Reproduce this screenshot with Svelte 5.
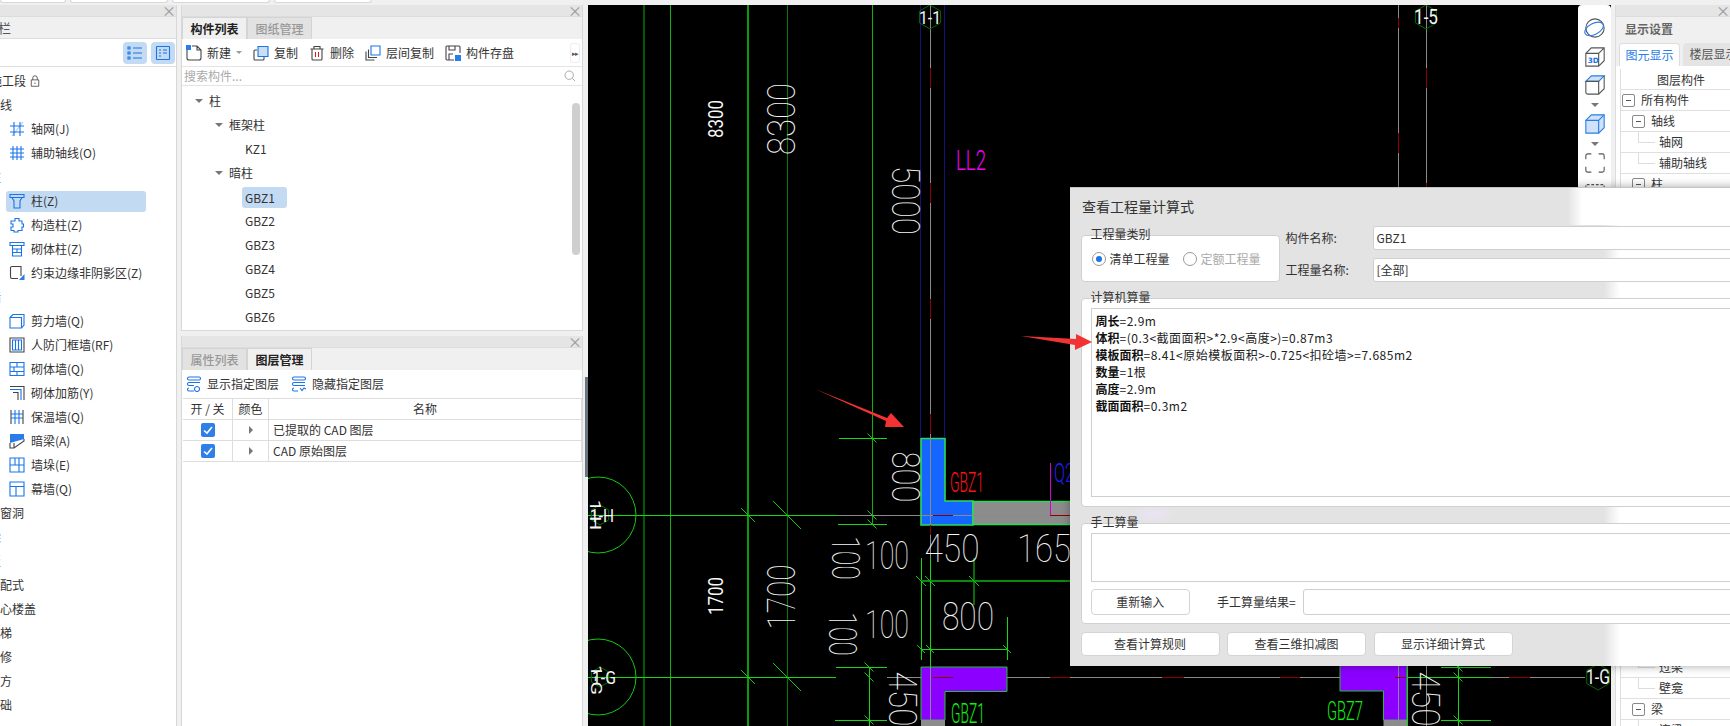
<script lang="ts">
  type Icon = { d?: string; g?: string; f?: string; l?: string; r?: string };

  const icons: Record<string, Icon> = {
    axis: { d: 'M1 5H15M1 11H15M5 1V15M11 1V15', l: 'M14 1L3 15' },
    aux: { d: 'M1 4H15M1 8H15M1 12H15M4 1V15M8 1V15M12 1V15' },
    col: { d: 'M1 1.5H15V4.5H1ZM3 4.5L5 8V15H11V8L13 4.5' },
    gz: { d: 'M6 1.5H10V4H13V7H14.5V10H13V13.5H9V15H5V13.5H2V10H4V7H2V4H6Z' },
    brickcol: { d: 'M1 1.5H15V4.5H1ZM3.5 4.5V15H12.5V4.5M3.5 8H12.5M3.5 11.5H12.5M8 8V11.5' },
    edge: { g: 'M3 1.5H12V11M3 1.5A1.5 1.5 0 0 0 1.5 3V12A1.5 1.5 0 0 0 3 13.5H9', f: 'M10 15L15.5 9V15Z' },
    shear: { d: 'M1 4.5H12.5V15H1ZM1 4.5L4 1.5H15V12L12.5 15' },
    door: { g: 'M1 1H15V15H1Z', d: 'M3.5 3H12.5V13H3.5ZM6.5 3V13M9.5 3V13' },
    brick: { d: 'M1 1.5H15V14.5H1ZM1 6H15M1 10.5H15M8 1.5V6M5 6V10.5M8 10.5V14.5' },
    rebar: { g: 'M1 1.5H15V15M4 7.5H9V15', d: 'M1 4.5H12V15' },
    insul: { g: 'M2 1V15M14 1V15', d: 'M6 1V15M10 1V15M2 5H14M2 9H14' },
    hidden: { f: 'M1 1H15V6L1 10Z', g: 'M1 10V15H5L15 8V6M5 10V15' },
    pier: { d: 'M1 1H15V15H1ZM1 8H15M6 1V8M10 8V15M10 1V8' },
    curtain: { d: 'M1 1H15V15H1ZM1 5.5H15M7 5.5V15' },
    listA: { d: 'M6 3H15M6 8H15M6 13H15M1 2H3V4H1ZM1 7H3V9H1ZM1 12H3V14H1Z' },
    listB: { d: 'M2 1.5H14A.5 .5 0 0 1 14.5 2V14A.5 .5 0 0 1 14 14.5H2A.5 .5 0 0 1 1.5 14V2A.5 .5 0 0 1 2 1.5ZM4 5H6M8 5H12M4 8H6M8 8H12M4 11H6' },
    newdoc: { g: 'M1 5V13A2 2 0 0 0 3 15H13A2 2 0 0 0 15 13V5L11 1H6M11 1V5H15', f: 'M0 0H5V5H0Z' },
    copy: { g: 'M4 5H2A1 1 0 0 0 1 6V14A1 1 0 0 0 2 15H10A1 1 0 0 0 11 14V12', d: 'M5 1.5H15V11.5H5Z', l: 'M5 1.5H15V11.5H5Z' },
    trash: { g: 'M1.5 4H14.5M5 4V1.5H11V4M3 4V14A1 1 0 0 0 4 15H12A1 1 0 0 0 13 14V4', r: 'M6.5 7V12M9.5 7V12' },
    layercopy: { g: 'M1 6.5V15H9.5M3.5 4.5V12.5H12', d: 'M6 1H15V10H6Z' },
    store: { g: 'M9 15H2A1 1 0 0 1 1 14V2A1 1 0 0 1 2 1H14A1 1 0 0 1 15 2V8M4 15V9H8M4 1V5H10V1', f: 'M10 10H16V16H10Z' },
    show: { d: 'M3 1H13A1.5 1.5 0 0 1 13 4H3A1.5 1.5 0 0 1 3 1ZM3 6.5H14M3 6.5A1.5 1.5 0 0 0 3 9.5H8M3 12A1.5 1.5 0 0 0 3 15H8M11 10.5A2.5 2.5 0 1 0 11.01 10.5Z' },
    hide: { d: 'M3 1H13A1.5 1.5 0 0 1 13 4H3A1.5 1.5 0 0 1 3 1ZM3 6.5H14M3 6.5A1.5 1.5 0 0 0 3 9.5H14M3 12A1.5 1.5 0 0 0 3 15H7M9 12L11 14.5L13 12L15 13' },
    lock: { g: 'M3 6.5H13V15H3ZM5 6.5V4A3 3 0 0 1 11 4V6.5M8 10V12' }
  };

  const sections = [
    { label: '施工段', off: 10, lock: true },
    { label: '轴线' },
    { icon: 'axis', label: '轴网(J)' },
    { icon: 'aux', label: '辅助轴线(O)' },
    { label: '柱', sliver: true },
    { icon: 'col', label: '柱(Z)', active: true },
    { icon: 'gz', label: '构造柱(Z)' },
    { icon: 'brickcol', label: '砌体柱(Z)' },
    { icon: 'edge', label: '约束边缘非阴影区(Z)' },
    { label: '墙', sliver: true },
    { icon: 'shear', label: '剪力墙(Q)' },
    { icon: 'door', label: '人防门框墙(RF)' },
    { icon: 'brick', label: '砌体墙(Q)' },
    { icon: 'rebar', label: '砌体加筋(Y)' },
    { icon: 'insul', label: '保温墙(Q)' },
    { icon: 'hidden', label: '暗梁(A)' },
    { icon: 'pier', label: '墙垛(E)' },
    { icon: 'curtain', label: '幕墙(Q)' },
    { label: '门窗洞' },
    { label: '梁', sliver: true },
    { label: '板', sliver: true },
    { label: '装配式' },
    { label: '空心楼盖' },
    { label: '楼梯' },
    { label: '装修' },
    { label: '土方' },
    { label: '基础' }
  ];

  const tree = [
    { label: '柱', depth: 0, open: true },
    { label: '框架柱', depth: 1, open: true },
    { label: 'KZ1', depth: 2 },
    { label: '暗柱', depth: 1, open: true },
    { label: 'GBZ1', depth: 2, active: true },
    { label: 'GBZ2', depth: 2 },
    { label: 'GBZ3', depth: 2 },
    { label: 'GBZ4', depth: 2 },
    { label: 'GBZ5', depth: 2 },
    { label: 'GBZ6', depth: 2 }
  ];

  const tools = [
    { icon: 'newdoc', label: '新建', arrow: true },
    { icon: 'copy', label: '复制' },
    { icon: 'trash', label: '删除' },
    { icon: 'layercopy', label: '层间复制' },
    { icon: 'store', label: '构件存盘' }
  ];

  // 图层构件 rows, each 21px; the middle ones sit behind the dialog
  const layers = [
    ['所有构件', 0, 1], ['轴线', 1, 1], ['轴网', 2, 0], ['辅助轴线', 2, 0], ['柱', 1, 1],
    ['柱', 2, 0], ['构造柱', 2, 0], ['砌体柱', 2, 0], ['约束边缘非阴影区', 2, 0], ['墙', 1, 1],
    ['剪力墙', 2, 0], ['人防门框墙', 2, 0], ['砌体墙', 2, 0], ['砌体加筋', 2, 0], ['保温墙', 2, 0],
    ['暗梁', 2, 0], ['墙垛', 2, 0], ['幕墙', 2, 0], ['门窗洞', 1, 1], ['门', 2, 0],
    ['窗', 2, 0], ['门联窗', 2, 0], ['墙洞', 2, 0], ['带形窗', 2, 0], ['带形洞', 2, 0],
    ['飘窗', 2, 0], ['老虎窗', 2, 0], ['过梁', 2, 0], ['壁龛', 2, 0], ['梁', 1, 1],
    ['连梁', 2, 0]
  ] as [string, number, number][];

  const formula = [
    ['周长', '=2.9m'],
    ['体积', '=(0.3<截面面积>*2.9<高度>)=0.87m3'],
    ['模板面积', '=8.41<原始模板面积>-0.725<扣砼墙>=7.685m2'],
    ['数量', '=1根'],
    ['高度', '=2.9m'],
    ['截面面积', '=0.3m2']
  ];

  // cad labels: centre x/y, length along the text, cap height, rotation
  const W = '#f6f6f6';
  const cadText = [
    { t: '8300', x: 716, y: 119, w: 38, h: 14, r: -90, c: W },
    { t: '8300', x: 781.5, y: 119, w: 72, h: 27, r: -90, c: W },
    { t: '5000', x: 905, y: 200.5, w: 69, h: 27, r: 90, c: W },
    { t: '800', x: 905, y: 477, w: 51, h: 27, r: 90, c: W },
    { t: '1700', x: 716, y: 596, w: 38, h: 14, r: -90, c: W },
    { t: '1700', x: 781, y: 597, w: 65, h: 27, r: -90, c: W },
    { t: '100', x: 845.7, y: 558, w: 44, h: 27, r: 90, c: W },
    { t: '100', x: 887, y: 555, w: 44, h: 28, r: 0, c: W },
    { t: '450', x: 952, y: 548, w: 55, h: 28, r: 0, c: W },
    { t: '1650', x: 1053, y: 548, w: 72, h: 28, r: 0, c: W },
    { t: '800', x: 968, y: 616, w: 52, h: 28, r: 0, c: W },
    { t: '100', x: 842.7, y: 634, w: 44, h: 27, r: 90, c: W },
    { t: '100', x: 887, y: 623.5, w: 44, h: 28, r: 0, c: W },
    { t: '450', x: 902, y: 699, w: 55, h: 27, r: 90, c: W },
    { t: '450', x: 1425, y: 699, w: 55, h: 27, r: 90, c: W },
    { t: 'GBZ1', x: 967, y: 482.5, w: 34, h: 19, r: 0, c: '#ff1010' },
    { t: 'GBZ1', x: 968, y: 713.5, w: 34, h: 19, r: 0, c: '#10f010' },
    { t: 'GBZ7', x: 1345, y: 711, w: 36, h: 18, r: 0, c: '#10f010' },
    { t: 'LL2', x: 971, y: 160, w: 30, h: 20, r: 0, c: '#f000f0' },
    { t: 'Q2', x: 1064, y: 473, w: 20, h: 18, r: 0, c: '#2020ff' },
    { t: '1-1', x: 930, y: 17, w: 22, h: 13, r: 0, c: W },
    { t: '1-5', x: 1426, y: 17, w: 24, h: 14, r: 0, c: W },
    { t: '1-H', x: 602, y: 515, w: 24, h: 13, r: 0, c: W },
    { t: '1-H', x: 595, y: 515, w: 30, h: 11, r: 90, c: W },
    { t: '1-G', x: 604, y: 677, w: 24, h: 13, r: 0, c: W },
    { t: '1-G', x: 596, y: 680, w: 30, h: 11, r: 90, c: W },
    { t: '1-G', x: 1598, y: 677, w: 24, h: 14, r: 0, c: W }
  ];

  // dimension ticks, [x, y, half length]
  const ticks = [
    [748, 515, 7], [787, 515, 14], [748, 677, 7], [787, 677, 14],
    [872, 438, 4.5], [872, 515, 4.5], [872, 524, 4.5],
    [869, 667, 4.5], [869, 677, 4.5], [869, 720, 4.5],
    [921, 581, 5], [930, 581, 5], [974, 581, 5],
    [921, 649, 4], [930, 649, 4], [1007, 649, 4],
    [1458, 667, 4.5], [1458, 677, 4.5], [1458, 720, 4.5]
  ];

  const hexPoints = (cx: number, cy: number, r: number) =>
    [0, 1, 2, 3, 4, 5]
      .map((i) => {
        const a = (Math.PI / 3) * i + Math.PI / 6;
        return `${cx + r * Math.cos(a)},${cy + r * Math.sin(a)}`;
      })
      .join(' ');
</script>

{#snippet ic(name: string, cls = 'ic')}
  {@const i = icons[name]}
  <svg class={cls} viewBox="0 0 16 16" aria-hidden="true">
    {#if i.l}<path d={i.l} class={name === 'axis' ? 'p-pale' : 'p-lf'} />{/if}
    {#if i.f}<path d={i.f} class="p-f" />{/if}
    {#if i.g}<path d={i.g} class="p-g" />{/if}
    {#if i.d}<path d={i.d} class="p-d" />{/if}
    {#if i.r}<path d={i.r} class="p-r" />{/if}
  </svg>
{/snippet}

{#snippet closeBar()}
  <div class="closebar"><span class="x">×</span></div>
{/snippet}

<div class="app">
  <div class="topstrip">
    <span class="ttab first"></span><span class="ttab"></span><span class="ttab"></span><span class="ttab"></span>
  </div>

  <div class="main">
    <aside class="left panel">
      {@render closeBar()}
      <div class="ltitle"><span>导航栏</span></div>
      <div class="ltools">
        <span class="lbtn">{@render ic('listA')}</span>
        <span class="lbtn">{@render ic('listB')}</span>
      </div>
      <div class="lrows">
        {#each sections as s}
          {#if s.icon}
            <div class="lrow item" class:active={s.active}>{@render ic(s.icon)}<span>{s.label}</span></div>
          {:else}
            <div class="lrow sec" class:sliver={s.sliver} class:lockrow={s.lock}>
              <span>{s.label}</span>
              {#if s.lock}{@render ic('lock', 'ic small')}{/if}
            </div>
          {/if}
        {/each}
      </div>
    </aside>

    <section class="mid">
      <div class="panel upper">
        {@render closeBar()}
        <div class="tabs">
          <span class="tab on">构件列表</span><span class="tab">图纸管理</span>
        </div>
        <div class="mtools">
          {#each tools as t}
            <span class="tool">
              {@render ic(t.icon)}
              <span>{t.label}</span>
              {#if t.arrow}<i class="caret small-caret"></i>{/if}
            </span>
          {/each}
          <span class="more">▸▸</span>
        </div>
        <div class="search">
          <span>搜索构件...</span>
          <svg viewBox="0 0 12 12" class="lens"><circle cx="5.2" cy="5.2" r="4.2" /><path d="M8.4 8.4L11 11" /></svg>
        </div>
        <div class="tree">
          {#each tree as n}
            <div class="node d{n.depth}">
              {#if n.open}<i class="caret"></i>{/if}
              <span class:sel={n.active}>{n.label}</span>
            </div>
          {/each}
          <span class="scroll"></span>
        </div>
      </div>

      <div class="panel lower">
        {@render closeBar()}
        <div class="tabs">
          <span class="tab off">属性列表</span><span class="tab on">图层管理</span>
        </div>
        <div class="ltoolbar">
          <span class="tool">{@render ic('show')}<span>显示指定图层</span></span>
          <span class="tool">{@render ic('hide')}<span>隐藏指定图层</span></span>
        </div>
        <div class="ltable">
          <div class="cell head">开 / 关</div>
          <div class="cell head">颜色</div>
          <div class="cell head">名称</div>
          {#each ['已提取的 CAD 图层', 'CAD 原始图层'] as row}
            <div class="cell"><span class="check"><svg viewBox="0 0 14 14"><path d="M3 7.5L6 10L11 4" /></svg></span></div>
            <div class="cell"><i class="tri"></i></div>
            <div class="cell name">{row}</div>
          {/each}
        </div>
      </div>
    </section>

    <div class="split"><span class="handle"></span></div>

    <div class="canvas">
      <svg class="cad" viewBox="588 5 1023 721" width="1023" height="721">
        <rect x="588" y="5" width="1023" height="721" fill="#000" />

        <!-- columns on the grid -->
        <path d="M921 438.5H945V501H973V525H921Z" fill="#1565ff" stroke="#28dc58" stroke-width="1.6" />
        <path d="M973 501.5H1075V524.5H973Z" fill="#8c8c8c" stroke="#28dc58" stroke-width="1.6" />
        <path d="M921 667H1007V691.5H945V720H921Z" fill="#8b00ff" stroke="#22c040" />
        <rect x="921" y="720" width="24" height="6" fill="#8c8c8c" />
        <path d="M1340 660V691H1383.5V720H1407V660Z" fill="#8b00ff" stroke="#22c040" />
        <rect x="1383.5" y="720" width="23.5" height="6" fill="#8c8c8c" />

        <!-- grid lines -->
        <g fill="none">
          <path d="M644 5V726" stroke="#005a00" stroke-width="2" />
          <path d="M670.5 5V726" stroke="#12b012" />
          <path d="M748 5V726" stroke="#0a9a0a" stroke-width="2" />
          <path d="M787.5 5V726" stroke="#067a06" />
          <path d="M872.5 5V524" stroke="#10b010" />
          <path d="M920.5 5V438M944.5 5V438" stroke="#12127a" />
          <path d="M930.5 5V558M930.5 667V726" stroke="#8a8a8a" />
          <path d="M1398.5 5V726M1426.5 5V726" stroke="#8a8a8a" />
          <path d="M930.5 68V88M930.5 183V203M930.5 299V319M930.5 414V434M930.5 525V535M1398.5 18V28M1398.5 133V153M1426.5 68V88M1426.5 183V203" stroke="#8c0000" />

          <path d="M588 515.5H838" stroke="#14d814" />
          <path d="M838 515.5H1075" stroke="#8a8a8a" />
          <path d="M933 515.5H953M1050 515.5H1070" stroke="#8c0000" />
          <path d="M588 677.5H836" stroke="#14d814" />
          <path d="M887 677.5H921M1007 677.5H1340M1491 677.5H1585" stroke="#8a8a8a" />
          <path d="M933 677.5H953M1050 677.5H1070M1162 677.5H1184M1280 677.5H1300M1395 677.5H1406M1509 677.5H1530" stroke="#8c0000" />

          <path d="M839 438.5H887M838 524.5H887M836 667.5H887M835 720.5H887M1441 667.5H1491M1407 677.5H1491M1441 720.5H1491" stroke="#14d814" />
          <path d="M869.5 667V726M1458.5 666V726M1407.5 666V726" stroke="#14d814" />
          <path d="M921.5 558V660M930.5 558V667M974 558V605M1007.5 617V660" stroke="#14d814" />
          <path d="M921 581H1075" stroke="#0a8a0a" stroke-width="2" />
          <path d="M921 649.5H1007" stroke="#14d814" />
          <path d="M1050.5 463V515" stroke="#d000d0" />

          {#each ticks as [x, y, l]}
            <path d="M{x - l} {y - l}L{x + l} {y + l}" stroke="#14c814" />
          {/each}

          <circle cx="598" cy="515" r="38" stroke="#14c814" />
          <circle cx="598" cy="677" r="38" stroke="#14c814" />
          <polygon points={hexPoints(600, 515, 10)} stroke="#006a00" />
          <polygon points={hexPoints(600, 677, 10)} stroke="#006a00" />
          <polygon points={hexPoints(930, 17, 12)} stroke="#006a00" />
          <polygon points={hexPoints(1426, 17, 12)} stroke="#006a00" />
          <polygon points={hexPoints(1598, 677, 13)} stroke="#006a00" />
        </g>

        {#each cadText as c}
          <text
            class="cadtext"
            transform="translate({c.x} {c.y}) rotate({c.r})"
            y={c.h / 2}
            font-size={c.h / 0.71}
            font-weight={c.h < 15 ? 400 : c.h < 21 ? 300 : 100}
            fill={c.c}
            textLength={c.w}
            lengthAdjust="spacingAndGlyphs"
            text-anchor="middle">{c.t}</text>
        {/each}

        <polygon points="815,389 887,418 891,413 904,427 885,427 886,421" fill="#f33333" />
      </svg>

      <div class="vtools">
        <svg viewBox="0 0 24 24" class="vi"><ellipse cx="12" cy="12" rx="10" ry="10" class="s-g" /><ellipse cx="11" cy="13" rx="11" ry="6" transform="rotate(-28 11 13)" class="s-b" /></svg>
        <svg viewBox="0 0 24 24" class="vi"><path d="M2 8L8 2H22V16L16 22H2ZM2 8H16V22M16 8L22 2" class="s-g" /><text x="4" y="19" class="t3d">3D</text></svg>
        <svg viewBox="0 0 24 24" class="vi"><path d="M2 8L8 2H22L16 8Z" class="s-bl" /><path d="M2 8V20A2 2 0 0 0 4 22H16L22 16V2M2 8H16V22" class="s-g" /></svg>
        <i class="caret vcaret"></i>
        <svg viewBox="0 0 24 24" class="vi"><path d="M2 8L8 2H22V16L16 22H2Z" class="s-bl s-b" /><path d="M2 8H16V22M16 8L22 2" class="s-b" /></svg>
        <i class="caret vcaret"></i>
        <svg viewBox="0 0 24 24" class="vi"><path d="M2 8V4A2 2 0 0 1 4 2H8M16 2H20A2 2 0 0 1 22 4V8M22 16V20A2 2 0 0 1 20 22H16M8 22H4A2 2 0 0 1 2 20V16" class="s-g" /></svg>
        <svg viewBox="0 0 24 24" class="vi"><path d="M2 8V4H22V8" class="s-g" stroke-dasharray="3 2" /></svg>
      </div>
    </div>

    <aside class="right panel">
      {@render closeBar()}
      <div class="rtitle">显示设置</div>
      <div class="rtabs"><span class="rtab on">图元显示</span><span class="rtab">楼层显示</span></div>
      <div class="rtable">
        <div class="rhead">图层构件</div>
        {#each layers as [label, depth, box], i}
          <div class="rrow rd{depth}">
            {#if depth === 2}<i class="conn" class:last={layers[i + 1]?.[1] !== 2}></i>{/if}
            {#if box}<span class="minus"></span>{/if}
            <span>{label}</span>
          </div>
        {/each}
      </div>
    </aside>
  </div>

  <div class="dialog">
    <div class="dtitle">查看工程量计算式</div>

    <div class="toprow">
      <div class="group type">
        <span class="legend">工程量类别</span>
        <span class="radio on"></span><span class="rlabel">清单工程量</span>
        <span class="radio"></span><span class="rlabel dim">定额工程量</span>
      </div>
      <div class="fields">
        <label for="cname">构件名称:</label>
        <div id="cname" class="input">GBZ1</div>
        <label for="qname">工程量名称:</label>
        <div id="qname" class="input">[全部]</div>
      </div>
    </div>

    <div class="group calc">
      <span class="legend">计算机算量</span>
      <div class="area result">
        {#each formula as [k, v]}
          <div class="fline"><b>{k}</b>{v}</div>
        {/each}
      </div>
    </div>

    <div class="group hand">
      <span class="legend">手工算量</span>
      <div class="area manual"></div>
      <div class="handrow">
        <button class="btn redo">重新输入</button>
        <span class="hlabel">手工算量结果=</span>
        <div class="input hinput"></div>
      </div>
    </div>

    <div class="foot">
      <button class="btn">查看计算规则</button>
      <button class="btn">查看三维扣减图</button>
      <button class="btn">显示详细计算式</button>
    </div>
  </div>

  <svg class="callout" viewBox="1015 330 80 24" width="80" height="24" aria-hidden="true">
    <polygon points="1021,336 1076,339 1076,334 1092,342 1075,350 1075,345" fill="#f33333" />
  </svg>
</div>

<style>
  :global(body) {
    background: #f0f0f0;
  }

  :global(*) {
    box-sizing: border-box;
  }

  .app {
    position: relative;
    width: 1730px;
    height: 726px;
    overflow: hidden;
    background: #f0f0f0;
    color: #333;
    font-family: "Noto Sans CJK SC", "Noto Sans", sans-serif;
    font-size: 12px;
    line-height: 16px;
  }

  .topstrip {
    height: 5px;
    display: flex;
    gap: 4px;
  }

  .ttab {
    width: 98px;
    height: 3px;
    background: #fff;
    border: 1px solid #d8d8d8;
    border-top: 0;
    border-radius: 0 0 4px 4px;
  }

  .ttab.first {
    width: 66px;
  }

  .main {
    height: 721px;
    display: flex;
  }

  .panel {
    background: #fff;
    overflow: hidden;
  }

  .closebar {
    height: 12px;
    background: #e5e5e5;
    display: flex;
    justify-content: flex-end;
    align-items: center;
    padding-right: 2px;
    border-bottom: 1px solid #dcdcdc;
  }

  .x {
    color: #999;
    font-size: 14px;
    line-height: 11px;
    width: 12px;
    text-align: center;
  }

  .ic {
    width: 16px;
    height: 16px;
    flex: none;
    fill: none;
    stroke-width: 1.1;
  }

  .ic.small {
    width: 12px;
    height: 12px;
  }

  .p-d {
    stroke: #1a73e8;
  }

  .p-g {
    stroke: #444;
  }

  .p-f {
    fill: #2a7de8;
  }

  .p-r {
    stroke: #d02020;
  }

  .p-pale {
    stroke: #a8c8f0;
  }

  .p-lf {
    fill: #c9def7;
  }

  /* left navigation */
  .left {
    width: 177px;
    flex: none;
    border-right: 1px solid #d8d8d8;
  }

  .ltitle {
    height: 22px;
    background: #f0f0f0;
    margin-left: -28px;
    color: #555;
    font-size: 13px;
    line-height: 22px;
    border-bottom: 1px solid #ddd;
  }

  .ltools {
    height: 28px;
    display: flex;
    justify-content: flex-end;
    align-items: center;
    gap: 4px;
    padding-right: 1px;
    border-bottom: 1px solid #ddd;
  }

  .lbtn {
    width: 24px;
    height: 22px;
    background: #c3daf3;
    border-radius: 4px;
    display: flex;
    align-items: center;
    justify-content: center;
  }

  .lrows {
    padding-top: 2px;
  }

  .lrow {
    height: 24px;
    line-height: 24px;
    display: flex;
    align-items: center;
    white-space: nowrap;
  }

  .sec {
    margin-left: -12px;
    gap: 3px;
  }

  .sec.lockrow {
    margin-left: -10px;
  }

  .sec.sliver {
    margin-left: -11px;
    color: #2a7de8;
  }

  .item {
    margin: 0 30px 0 6px;
    padding-left: 3px;
    gap: 6px;
    height: 24px;
  }

  .item.active {
    background: #c3daf3;
    border-radius: 3px;
    height: 21px;
    margin-top: 1.5px;
    margin-bottom: 1.5px;
  }

  /* middle column */
  .mid {
    width: 402px;
    margin-left: 4px;
    flex: none;
    display: flex;
    flex-direction: column;
    gap: 5px;
  }

  .upper {
    height: 326px;
    border: 1px solid #d8d8d8;
    border-top: 0;
  }

  .lower {
    flex: 1;
    border-left: 1px solid #d8d8d8;
    border-right: 1px solid #d8d8d8;
  }

  .tabs {
    height: 22px;
    background: #f0f0f0;
    display: flex;
  }

  .tab {
    width: 65px;
    text-align: center;
    line-height: 22px;
    color: #999;
    background: #e2e2e2;
    border: 1px solid #d4d4d4;
    border-bottom: 0;
    font-weight: 500;
  }

  .tab.on {
    background: #f0f0f0;
    color: #222;
    font-weight: 700;
  }

  .mtools {
    height: 28px;
    display: flex;
    align-items: center;
    padding-left: 4px;
    gap: 11px;
    border-bottom: 1px solid #e4e4e4;
  }

  .tool {
    display: flex;
    align-items: center;
    gap: 5px;
    white-space: nowrap;
  }

  .more {
    margin-left: auto;
    margin-right: 2px;
    width: 10px;
    height: 20px;
    border: 1px solid #eee;
    border-radius: 3px;
    font-size: 7px;
    line-height: 18px;
    letter-spacing: -1px;
    color: #555;
    text-align: center;
  }

  .caret {
    display: inline-block;
    width: 0;
    height: 0;
    border: 4px solid transparent;
    border-top: 4.5px solid #777;
    border-bottom: 0;
    flex: none;
  }

  .small-caret {
    border-width: 3px;
    border-top-width: 3.5px;
    border-bottom-width: 0;
    border-top-color: #999;
    margin-left: 0;
  }

  .search {
    height: 19px;
    display: flex;
    align-items: center;
    justify-content: space-between;
    padding: 0 6px 0 2px;
    color: #aaa;
    border-bottom: 1px solid #e4e4e4;
  }

  .lens {
    width: 12px;
    height: 12px;
    fill: none;
    stroke: #aaa;
  }

  .tree {
    position: relative;
    padding-top: 3px;
  }

  .node {
    height: 24px;
    line-height: 24px;
    display: flex;
    align-items: center;
    gap: 3px;
  }

  .node span {
    padding: 0 3px;
  }

  .d0 {
    padding-left: 13px;
  }

  .d1 {
    padding-left: 33px;
  }

  .d2 {
    padding-left: 60px;
  }

  .node .sel {
    background: #c3daf3;
    border-radius: 3px;
    height: 21px;
    line-height: 21px;
    width: 45px;
  }

  .scroll {
    position: absolute;
    right: 2px;
    top: 17px;
    width: 8px;
    height: 152px;
    background: #cfcfcf;
    border-radius: 4px;
  }

  .ltoolbar {
    height: 28px;
    display: flex;
    align-items: center;
    gap: 12px;
    padding-left: 4px;
  }

  .ltable {
    display: grid;
    grid-template-columns: 50px 36px 1fr;
    grid-auto-rows: 21px;
    border-top: 1px solid #ddd;
    margin-left: 1px;
  }

  .cell {
    border-right: 1px solid #ddd;
    border-bottom: 1px solid #ddd;
    display: flex;
    align-items: center;
    justify-content: center;
  }

  .cell.name {
    justify-content: flex-start;
    padding-left: 4px;
  }

  .check {
    width: 14px;
    height: 14px;
    background: #2f7fe8;
    border-radius: 2px;
    display: flex;
  }

  .check path {
    fill: none;
    stroke: #fff;
    stroke-width: 1.6;
  }

  .tri {
    width: 0;
    height: 0;
    border: 4px solid transparent;
    border-left: 4px solid #777;
    border-right: 0;
  }

  .split {
    width: 5px;
    flex: none;
    display: flex;
    align-items: flex-start;
    justify-content: flex-end;
  }

  .handle {
    margin-top: 372px;
    width: 3px;
    height: 100px;
    background: #6b7480;
  }

  /* drawing area */
  .canvas {
    position: relative;
    width: 1023px;
    flex: none;
    overflow: hidden;
    background: #000;
  }

  .cad {
    display: block;
  }

  .cadtext {
    font-family: Roboto, "Liberation Sans", sans-serif;
  }

  .vtools {
    position: absolute;
    top: 0;
    right: 0;
    width: 33px;
    height: 190px;
    background: #fff;
    border-radius: 4px 4px 0 0;
    display: flex;
    flex-direction: column;
    align-items: center;
    padding-top: 12px;
    gap: 6.5px;
  }

  .vi {
    width: 22px;
    height: 22px;
    flex: none;
    fill: none;
    stroke-width: 1.2;
  }

  .s-g {
    stroke: #555;
  }

  .s-b {
    stroke: #2a7de8;
  }

  .s-bl {
    fill: #cfe2fa;
    stroke: #2a7de8;
  }

  .t3d {
    font-family: "DejaVu Sans", sans-serif;
    font-size: 8px;
    font-weight: 700;
    fill: #1a73e8;
  }

  /* right settings */
  .right {
    margin-left: 4px;
    flex: 1;
    background: #fff;
    border-left: 1px solid #ddd;
  }

  .rtitle {
    height: 23px;
    background: #f0f0f0;
    padding-left: 9px;
    line-height: 23px;
    color: #666;
    font-weight: 700;
    white-space: nowrap;
  }

  .rtabs {
    height: 26px;
    background: #f0f0f0;
    display: flex;
    padding: 3px 0 0 3px;
    gap: 3px;
    white-space: nowrap;
    overflow: hidden;
    margin-bottom: 3px;
  }

  .rtab {
    flex: none;
    width: 61px;
    line-height: 22px;
    text-align: center;
    background: #e4e4e4;
    color: #555;
    border-radius: 4px 4px 0 0;
  }

  .rtab.on {
    background: #fff;
    color: #2a7de8;
    border: 1px solid #ddd;
    border-bottom: 0;
  }

  .rtable {
    margin-left: 4px;
    border-left: 1px solid #ddd;
  }

  .rhead,
  .rrow {
    border-bottom: 1px solid #e0e0e0;
  }

  .rhead {
    height: 21px;
    line-height: 21px;
    padding-left: 36px;
    white-space: nowrap;
  }

  .rrow {
    position: relative;
    height: 21px;
    display: flex;
    align-items: center;
    gap: 6px;
    white-space: nowrap;
  }

  .rd0 {
    padding-left: 1px;
  }

  .rd1 {
    padding-left: 11px;
  }

  .rd2 {
    padding-left: 38px;
  }

  .minus {
    position: relative;
    width: 13px;
    height: 13px;
    border: 1px solid #888;
    border-radius: 2px;
    flex: none;
    background: #fff;
  }

  .minus::after {
    content: "";
    position: absolute;
    left: 3px;
    top: 5px;
    width: 5px;
    height: 1px;
    background: #555;
  }

  .conn {
    position: absolute;
    left: 17px;
    top: -1px;
    width: 17px;
    height: 12px;
    border-left: 1px solid #ddd;
    border-bottom: 1px solid #ddd;
  }

  /* floating dialog */
  .dialog {
    position: absolute;
    left: 1070px;
    top: 187px;
    width: 700px;
    height: 479px;
    display: flex;
    flex-direction: column;
    background:
      radial-gradient(ellipse 24px 9px at 84px 326px, #ebe3f5, transparent),
      linear-gradient(90deg, #e3e3e3 0 534px, #fff 550px);
    box-shadow: 0 0 9px rgba(0, 0, 0, 0.35);
    border-top: 1px solid #c4c4c4;
  }

  .dtitle {
    height: 37px;
    padding-left: 12px;
    font-size: 14px;
    line-height: 37px;
    background: linear-gradient(90deg, #e3e3e3 0 498px, #fff 512px);
  }

  .toprow {
    display: flex;
    height: 57px;
    padding-left: 10.5px;
  }

  .group {
    position: relative;
    background: #fff;
    border: 1px solid #d0d0d0;
    border-radius: 4px;
  }

  .legend {
    position: absolute;
    left: 9px;
    top: -10px;
    white-space: nowrap;
    line-height: 16px;
  }

  .type {
    width: 199px;
    height: 47px;
    margin-top: 10px;
    display: flex;
    align-items: center;
    padding-left: 10px;
    padding-top: 1px;
  }

  .radio {
    position: relative;
    width: 14px;
    height: 14px;
    border: 1px solid #999;
    border-radius: 50%;
    flex: none;
    margin-right: 4px;
  }

  .radio.on::after {
    content: "";
    position: absolute;
    left: 3px;
    top: 3px;
    width: 6px;
    height: 6px;
    border-radius: 50%;
    background: #1a73e8;
  }

  .rlabel {
    margin-right: 13px;
    white-space: nowrap;
  }

  .rlabel.dim {
    color: #aaa;
    margin-right: 0;
  }

  .fields {
    margin-left: 6px;
    display: grid;
    grid-template-columns: 87px 1fr;
    grid-auto-rows: 24px;
    row-gap: 8px;
    flex: 1;
    padding-top: 1px;
    align-items: center;
  }

  .input {
    height: 24px;
    background: #fff;
    border: 1px solid #cfcfcf;
    border-radius: 3px;
    padding-left: 3px;
    line-height: 22px;
  }

  .calc {
    margin: 16px 0 0 10.5px;
    height: 209px;
    padding: 9px 0 0 9px;
  }

  .area {
    background: #fff;
    border: 1px solid #cfcfcf;
  }

  .result {
    height: 189px;
    padding: 3px 0 0 4px;
  }

  .fline {
    height: 17px;
    line-height: 17px;
    color: #222;
    letter-spacing: 0.5px;
    white-space: nowrap;
  }

  .fline b {
    font-weight: 700;
    color: #111;
    letter-spacing: 0;
  }

  .hand {
    margin: 16px 0 0 10.5px;
    height: 101px;
    padding: 9px 0 0 9px;
  }

  .manual {
    height: 49px;
  }

  .handrow {
    display: flex;
    align-items: center;
    margin-top: 7px;
  }

  .redo {
    width: 99.5px;
    height: 26px;
    flex: none;
  }

  .hlabel {
    margin-left: 27px;
    width: 86px;
    flex: none;
    white-space: nowrap;
  }

  .hinput {
    height: 26px;
    flex: 1;
  }

  .btn {
    background: #fff;
    border: 1px solid #d4d4d4;
    border-radius: 4px;
    color: #333;
    font: inherit;
    padding: 0;
  }

  .foot {
    margin: 8px 0 0 10.5px;
    display: flex;
    gap: 7.5px;
  }

  .foot .btn {
    width: 139px;
    height: 24px;
  }

  .callout {
    position: absolute;
    left: 1015px;
    top: 330px;
  }
</style>
